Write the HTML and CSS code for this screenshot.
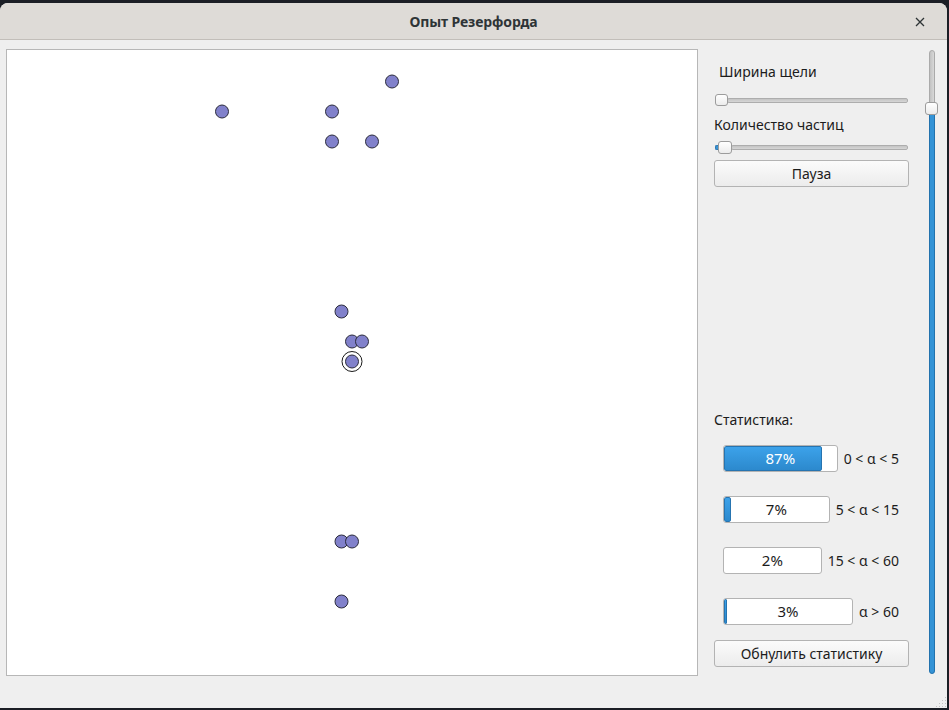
FILE: index.html
```html
<!DOCTYPE html>
<html lang="ru">
<head>
<meta charset="utf-8">
<title>Опыт Резерфорда</title>
<link rel="stylesheet" href="styles.css">
</head>
<body>
<div class="window">
  <div class="titlebar">
    <div class="title-spacer"></div>
    <div class="title">Опыт Резерфорда</div>
    <div class="close">
      <svg width="10" height="10" viewBox="0 0 10 10"><path d="M1 1 L9 9 M9 1 L1 9" stroke="#2e3436" stroke-width="1.3" fill="none"/></svg>
    </div>
  </div>
  <div class="content">
    <div class="canvas">
      <svg class="field" width="690" height="625" viewBox="0 0 690 625">
        <g fill="#8181cb" stroke="#2b2b3c" stroke-width="1">
          <circle cx="385" cy="31.5" r="6.5"/>
          <circle cx="215" cy="61.5" r="6.5"/>
          <circle cx="325" cy="61.5" r="6.5"/>
          <circle cx="325" cy="91.5" r="6.5"/>
          <circle cx="365" cy="91.5" r="6.5"/>
          <circle cx="334.5" cy="261.5" r="6.5"/>
          <circle cx="345" cy="291.5" r="6.5"/>
          <circle cx="355" cy="291.5" r="6.5"/>
          <circle cx="345" cy="311.5" r="10" fill="#ffffff" stroke="#1a1a1a"/>
          <circle cx="345" cy="311.5" r="6.5"/>
          <circle cx="334.5" cy="491.5" r="6.5"/>
          <circle cx="345" cy="491.5" r="6.5"/>
          <circle cx="334.5" cy="551.5" r="6.5"/>
        </g>
      </svg>
    </div>
    <div class="panel">
      <div class="label label-indent lbl1">Ширина щели</div>
      <div class="hslider sl1">
        <div class="handle"></div>
        <div class="track"></div>
      </div>
      <div class="label lbl2">Количество частиц</div>
      <div class="hslider sl2">
        <div class="track-fill"></div>
        <div class="handle handle-over"></div>
        <div class="track"></div>
      </div>
      <button class="btn btn-pause">Пауза</button>
      <div class="label lbl-stat">Статистика:</div>
      <div class="stat-row first">
        <div class="bar"><div class="fill" style="width:87%"></div><div class="bar-text light">87%</div></div>
        <div class="range">0 &lt; α &lt; 5</div>
      </div>
      <div class="stat-row">
        <div class="bar"><div class="fill" style="width:7px"></div><div class="bar-text">7%</div></div>
        <div class="range">5 &lt; α &lt; 15</div>
      </div>
      <div class="stat-row">
        <div class="bar"><div class="fill none" style="width:0"></div><div class="bar-text">2%</div></div>
        <div class="range">15 &lt; α &lt; 60</div>
      </div>
      <div class="stat-row">
        <div class="bar"><div class="fill thin" style="width:3px"></div><div class="bar-text">3%</div></div>
        <div class="range">α &gt; 60</div>
      </div>
      <button class="btn btn-reset">Обнулить статистику</button>
    </div>
    <div class="vslider">
      <div class="vtrack-top"></div>
      <div class="vhandle"></div>
      <div class="vtrack-fill"></div>
    </div>
  </div>
  <div class="footer">
    <svg class="grip" width="12" height="11" viewBox="0 0 12 11">
      <g fill="#c4c4c4">
        <rect x="10" y="1" width="1" height="1"/>
        <rect x="7" y="4" width="1" height="1"/><rect x="10" y="4" width="1" height="1"/>
        <rect x="4" y="7" width="1" height="1"/><rect x="7" y="7" width="1" height="1"/><rect x="10" y="7" width="1" height="1"/>
        <rect x="1" y="10" width="1" height="1"/><rect x="4" y="10" width="1" height="1"/><rect x="7" y="10" width="1" height="1"/><rect x="10" y="10" width="1" height="1"/>
      </g>
    </svg>
  </div>
</div>
</body>
</html>
```

FILE: styles.css
```css
* { box-sizing: border-box; }
html, body {
  margin: 0;
  padding: 0;
  background: #1b1e25;
  width: 949px;
  height: 710px;
  overflow: hidden;
  font-family: "Noto Sans", "Open Sans", sans-serif;
}
.window {
  margin-top: 3px;
  width: 947px;
  height: 705px;
  background: #efefef;
  border-radius: 8px 8px 0 0;
  overflow: hidden;
  display: flex;
  flex-direction: column;
}
.titlebar {
  height: 37px;
  flex: none;
  background: #dedbd7;
  border-bottom: 1px solid #c2beb9;
  display: flex;
  align-items: center;
}
.title-spacer { width: 60px; }
.title {
  flex: 1;
  text-align: center;
  font-size: 14px;
  font-weight: 700;
  color: #2e3436;
  letter-spacing: -0.1px;
}
.close {
  width: 60px;
  display: flex;
  justify-content: flex-end;
  padding-right: 22px;
  padding-top: 1px;
}
.close svg { display: block; }
.content {
  display: flex;
  padding: 9px 0 0 6px;
  flex: none;
}
.canvas {
  width: 692px;
  height: 627px;
  border: 1px solid #b7b7b7;
  background: #ffffff;
  flex: none;
}
.field { display: block; }
.panel {
  width: 195px;
  margin-left: 16px;
  display: flex;
  flex-direction: column;
  flex: none;
}
.label {
  font-size: 14px;
  line-height: 19px;
  height: 19px;
  color: #1c1c1c;
  white-space: nowrap;
}
.label-indent { padding-left: 5px; }
.lbl1 { margin-top: 13px; }
.lbl2 { margin-top: 9px; }
.lbl-stat { margin-top: 223px; }
.hslider {
  height: 12px;
  display: flex;
  align-items: center;
  padding-left: 1px;
  padding-right: 1px;
}
.sl1 { margin-top: 13px; }
.sl2 { margin-top: 7px; }
.track {
  flex: 1;
  height: 5px;
  background: linear-gradient(#c4c4c4, #d6d6d6);
  border: 1px solid #adadad;
  border-radius: 2px;
  margin-left: -1px;
}
.track-fill {
  width: 4px;
  height: 5px;
  background: #3a94d4;
  border: 1px solid #2a78b4;
  border-right: none;
  border-radius: 2px 0 0 2px;
  flex: none;
}
.handle {
  width: 13px;
  height: 12px;
  border: 1px solid #9c9c9c;
  border-radius: 3px;
  background: linear-gradient(#ffffff, #ececec);
  flex: none;
  position: relative;
  z-index: 1;
}
.handle-over { margin-left: -1px; height: 13px; width: 14px; }
.btn {
  display: block;
  width: 195px;
  height: 27px;
  border: 1px solid #b3b3b3;
  border-radius: 3px;
  background: linear-gradient(#fbfbfb, #ececec);
  font-family: "Noto Sans", "Open Sans", sans-serif;
  font-size: 14px;
  color: #1c1c1c;
  padding: 0;
  text-align: center;
  line-height: 25px;
}
.btn-pause { margin-top: 7px; }
.btn-reset { margin-top: 15px; }
.stat-row {
  display: flex;
  align-items: center;
  height: 27px;
  margin-top: 24px;
  padding-left: 9px;
  padding-right: 10px;
  gap: 6px;
}
.stat-row.first { margin-top: 16px; }
.bar {
  flex: 1;
  height: 27px;
  border: 1px solid #b3b3b3;
  border-radius: 3px;
  background: #ffffff;
  display: grid;
  overflow: hidden;
}
.fill {
  grid-area: 1 / 1;
  height: 25px;
  background: linear-gradient(#3ca2ea, #2c89cd);
  border: 1px solid #2674b0;
  border-radius: 2px;
  margin: 0;
}
.fill.thin { border-radius: 1px; }
.fill.none { border: none; }
.bar-text {
  grid-area: 1 / 1;
  text-align: center;
  font-size: 15px;
  line-height: 25px;
  color: #1c1c1c;
  z-index: 1;
}
.bar-text.light { color: #ffffff; }
.range {
  font-size: 14px;
  color: #1c1c1c;
  white-space: nowrap;
  line-height: 19px;
}
.vslider {
  width: 13px;
  margin-left: 16px;
  display: flex;
  flex-direction: column;
  align-items: center;
  padding-top: 1px;
}
.vtrack-top {
  width: 6px;
  height: 53px;
  background: linear-gradient(90deg, #c2c2c2, #d8d8d8);
  border: 1px solid #aaaaaa;
  border-radius: 3px 3px 0 0;
  margin-bottom: -1px;
}
.vhandle {
  width: 13px;
  height: 13px;
  border: 1px solid #9c9c9c;
  border-radius: 3px;
  background: linear-gradient(#ffffff, #ececec);
  position: relative;
  z-index: 1;
}
.vtrack-fill {
  width: 6px;
  height: 560px;
  background: #3493d6;
  border: 1px solid #2272ad;
  border-radius: 0 0 3px 3px;
  margin-top: -1px;
}
.footer {
  flex: 1;
  display: flex;
  justify-content: flex-end;
  align-items: flex-end;
  padding: 0 0 1px 0;
}
.grip { display: block; }
```
